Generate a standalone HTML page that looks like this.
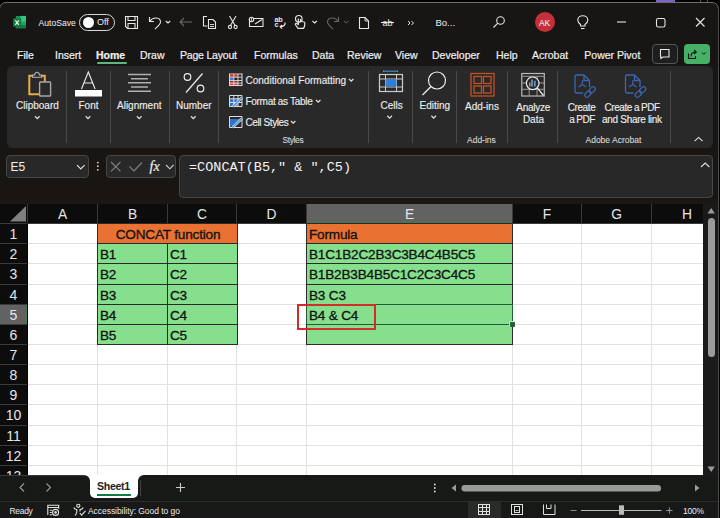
<!DOCTYPE html>
<html><head><meta charset="utf-8">
<style>
*{margin:0;padding:0;box-sizing:border-box}
html,body{width:720px;height:518px;overflow:hidden;background:#000}
body{position:relative;font-family:"Liberation Sans",sans-serif;color:#fff}
.a{position:absolute}
.t{position:absolute;white-space:nowrap;line-height:1}
#win{position:absolute;left:-1px;top:2px;width:720px;height:520px;background:#171615;border:1px solid #6e6e6e;border-radius:7px;overflow:hidden}
.menu{font-size:10.5px;color:#f0f0f0;top:50px;-webkit-text-stroke:0.2px #f0f0f0}
.rib{position:absolute;left:7px;top:66px;width:706px;height:82px;background:#292929;border-radius:6px}
.sep{position:absolute;width:1px;background:#4a4a4a;top:71px;height:72px}
.lbl{font-size:10px;color:#ececec;-webkit-text-stroke:0.15px #ececec}
.glbl{font-size:8.5px;color:#d8d8d8;-webkit-text-stroke:0.1px #d8d8d8}
.cell{font-size:13.6px;color:#111;letter-spacing:-0.2px;-webkit-text-stroke:0.3px #111}
</style></head><body>
<div id="win"></div>
<!-- Title bar -->
<svg class="a" style="left:13px;top:15px" width="14" height="14" viewBox="0 0 14 14">
 <rect x="2.8" y="0.9" width="10.2" height="12.3" rx="0.8" fill="#1d8f55"/>
 <rect x="7.5" y="0.9" width="5.5" height="6" fill="#33c481"/>
 <rect x="7.5" y="6.9" width="5.5" height="3.2" fill="#21a366"/>
 <rect x="2.8" y="10.1" width="10.2" height="3.1" fill="#167a45"/>
 <rect x="0.1" y="3.2" width="8.1" height="8.5" rx="0.8" fill="#107c41"/>
 <path d="M2.3 5.3 L5.9 9.8 M5.9 5.3 L2.3 9.8" stroke="#e6f7ec" stroke-width="1.2"/>
</svg>
<div class="t" style="left:38.5px;top:18.6px;font-size:8.6px;color:#f0f0f0">AutoSave</div>
<div class="a" style="left:79px;top:14px;width:36px;height:17px;border:1px solid #d8d8d8;border-radius:9px"></div>
<div class="a" style="left:83px;top:17px;width:11px;height:11px;border-radius:50%;background:#fff"></div>
<div class="t" style="left:97px;top:18px;font-size:9px;color:#f0f0f0">Off</div>
<svg class="a" style="left:0;top:0" width="720" height="42" viewBox="0 0 720 42" fill="none" stroke="#e6e6e6" stroke-width="1.1">
 <!-- save -->
 <path d="M125.5 16.5 H137.5 V28.5 H127.5 L125.5 26.5 Z"/>
 <path d="M128 16.5 V20.5 H135 V16.5"/>
 <path d="M128 28.5 V23.5 H135 V28.5"/>
 <!-- undo -->
 <path d="M149.5 17 V21.5 H154" />
 <path d="M149.8 21.2 C153 16.5 160.5 17 160.5 22 C160.5 24.5 157 27 155 29"/>
 <path d="M165.8 21 L168 23 L170.2 21" stroke-width="1.2"/>
 <!-- back arrow disabled -->
 <path d="M180 22 H192 M184 18 L180 22 L184 26" stroke="#6a6a6a"/>
 <!-- copy -->
 <path d="M207 16.5 H203.5 V26 H207.5"/>
 <path d="M208.5 19.5 H213 L215.5 22 V28.5 H208.5 Z"/>
 <path d="M210 24.5 H214 M210 26.5 H214" stroke-width="0.9"/>
 <!-- scissors -->
 <path d="M229.5 16 L235 25.5 M236 16 L230.5 25.5"/>
 <circle cx="230" cy="27" r="1.6"/>
 <circle cx="235.6" cy="27" r="1.6"/>
 <!-- envelope attach -->
 <path d="M249.5 19 V26.5 H263 V18.5 H254"/>
 <path d="M255 24 L262 19.5"/>
 <circle cx="251.5" cy="19.5" r="2.2"/>
 <path d="M251.5 18 V21" stroke-width="0.8"/>
 <!-- spelling -->
 <text x="274.6" y="21.8" font-size="7.2" font-weight="bold" fill="#e6e6e6" stroke="none" font-family="Liberation Sans" letter-spacing="-0.3">ab</text>
 <text x="274.6" y="27.3" font-size="7.2" font-weight="bold" fill="#e6e6e6" stroke="none" font-family="Liberation Sans">c</text>
 <path d="M285 22.3 C285.5 24.5 284 26.5 280.5 26.8 M282 25 L280.2 26.8 L282 28.6" stroke-width="1.2"/>
 <!-- touch -->
 <circle cx="298.8" cy="18.8" r="3.3" stroke-width="1.2"/>
 <path d="M298.3 18.5 V24.5 L296.5 23.5 C295.5 23 295 24.2 295.6 25 L298 28.3 H303.5 C304.5 27 304.8 25.5 304.8 24 V22.8 C304.8 21.5 302.5 21.5 300.5 21.5 V19" stroke-width="1.2"/>
 <path d="M312.5 21 L314.7 23 L316.9 21" stroke-width="1.2"/>
 <!-- redo disabled -->
 <path d="M338.5 17 V21.5 H334" stroke="#666"/>
 <path d="M338.2 21.2 C335 16.5 327.5 17 327.5 22 C327.5 24.5 331 27 333 29" stroke="#666"/>
 <path d="M344 21 L346.2 23 L348.4 21" stroke="#666" stroke-width="1"/>
 <!-- doc -->
 <path d="M359.5 17.5 H365 L368.5 21 V28.5 H359.5 Z"/>
 <path d="M365 17.5 V21 H368.5" stroke-width="0.9"/>
 <!-- strikethrough ab -->
 <text x="382.5" y="26" font-size="9" fill="#e6e6e6" stroke="none" font-family="Liberation Sans">ab</text>
 <path d="M381 22.5 H394"/>
 <!-- chevrons >> -->
 <path d="M408 21 L410 23 L408 25 M411.5 21 L413.5 23 L411.5 25" stroke-width="1"/>
 <!-- search -->
 <circle cx="500.5" cy="20.5" r="3.8"/>
 <path d="M497.8 23.2 L493.5 27.5"/>
 <!-- lightbulb -->
 <path d="M580.5 26 V24.5 C578.5 23 577.8 21.5 577.8 20 C577.8 17.5 580 15.8 582.8 15.8 C585.6 15.8 587.8 17.5 587.8 20 C587.8 21.5 587 23 585 24.5 V26 Z"/>
 <path d="M581 28.5 H584.5"/>
 <!-- minimize -->
 <path d="M617 22 H626" stroke-width="1.1"/>
 <!-- maximize -->
 <rect x="656.5" y="18.5" width="8.5" height="8.5" rx="1.8"/>
 <!-- close -->
 <path d="M696 18 L704.5 26.5 M704.5 18 L696 26.5"/>
</svg>
<div class="t" style="left:435.5px;top:18px;font-size:9.5px;color:#f0f0f0">Bo...</div>
<div class="a" style="left:535px;top:12px;width:20px;height:20px;border-radius:50%;background:#c42f3a"></div>
<div class="t" style="left:539px;top:18.5px;font-size:8.5px;color:#fff;letter-spacing:-0.2px">AK</div>

<!-- Menu -->
<div class="t menu" style="left:17px">File</div>
<div class="t menu" style="left:55px">Insert</div>
<div class="t menu" style="left:96px;font-weight:bold">Home</div>
<div class="a" style="left:97px;top:62px;width:30px;height:2px;background:#5fb57c;border-radius:1px"></div>
<div class="t menu" style="left:140px">Draw</div>
<div class="t menu" style="left:180px;letter-spacing:-0.2px">Page Layout</div>
<div class="t menu" style="left:254px">Formulas</div>
<div class="t menu" style="left:312px">Data</div>
<div class="t menu" style="left:347px">Review</div>
<div class="t menu" style="left:395px">View</div>
<div class="t menu" style="left:432px">Developer</div>
<div class="t menu" style="left:496px">Help</div>
<div class="t menu" style="left:532px">Acrobat</div>
<div class="t menu" style="left:584.3px">Power Pivot</div>
<div class="a" style="left:652px;top:44px;width:26px;height:20px;border:1px solid #555;border-radius:4px;background:#1e1e1e"></div>
<svg class="a" style="left:652px;top:44px" width="26" height="20" viewBox="0 0 26 20" fill="none" stroke="#e8e8e8" stroke-width="1.1">
 <path d="M8.5 5.5 H17 V13 H11 L9 14.5 V13 H8.5 Z"/>
</svg>
<div class="a" style="left:684px;top:44px;width:26px;height:20px;border-radius:4px;background:#46b064"></div>
<svg class="a" style="left:684px;top:44px" width="26" height="20" viewBox="0 0 26 20" fill="none" stroke="#111" stroke-width="1.1">
 <path d="M4.5 9.5 V14.5 H11.5 V12"/>
 <path d="M7 12.5 C7 9.5 9 8 12 8 M10 5.8 L12.3 8 L10 10.2"/>
 <path d="M18 8.5 L19.8 10.3 L21.6 8.5" stroke-width="1"/>
</svg>

<!-- Ribbon -->
<div class="rib"></div>
<div class="sep" style="left:66px"></div>
<div class="sep" style="left:110px"></div>
<div class="sep" style="left:169px"></div>
<div class="sep" style="left:218px"></div>
<div class="sep" style="left:368px"></div>
<div class="sep" style="left:412px"></div>
<div class="sep" style="left:456px"></div>
<div class="sep" style="left:507px"></div>
<div class="sep" style="left:557px"></div>
<div class="sep" style="left:670px"></div>

<svg class="a" style="left:0;top:60px" width="720" height="90" viewBox="0 60 720 90" fill="none">
 <!-- clipboard -->
 <path d="M32.5 75.8 H29.3 V94.3 H39.5 M41.5 75.8 H44.8 V81.5" stroke="#e8ab45" stroke-width="2"/>
 <path d="M32.5 77.3 V75 H34.5 C35 73 35.8 72.3 37 72.3 C38.2 72.3 39 73 39.5 75 H41.5 V77.3 Z" stroke="#b8b8b8" stroke-width="1.1"/>
 <rect x="39.6" y="82" width="11" height="14" rx="0.8" stroke="#a8a8a8" stroke-width="1.4"/>
 <!-- Font A -->
 <path d="M81.5 89 L88.3 72 L95.1 89 M84 83 H92.6" stroke="#eee" stroke-width="1.1"/>
 <rect x="75" y="90" width="27" height="6.5" fill="#fff"/>
 <!-- Alignment -->
 <path d="M128 74.5 H151 M131 78.7 H148 M128 82.8 H151 M131 87 H148 M128 91.2 H151" stroke="#b0b0b0" stroke-width="1.4"/>
 <!-- % -->
 <circle cx="187.5" cy="77" r="3.3" stroke="#eee" stroke-width="1.2"/>
 <circle cx="200.5" cy="88.5" r="3.3" stroke="#eee" stroke-width="1.2"/>
 <path d="M202.5 73.5 L186 92.5" stroke="#eee" stroke-width="1.2"/>
 <!-- CF icon -->
 <rect x="229.5" y="74" width="12.5" height="11.5" stroke="#ddd" stroke-width="1"/>
 <rect x="230" y="74.5" width="8" height="2.5" fill="#e03a3a"/>
 <rect x="230" y="77.5" width="3.5" height="2.8" fill="#3b7bd9"/>
 <rect x="230" y="81.5" width="8" height="3.5" fill="#e03a3a"/>
 <path d="M229.5 77.2 H242 M229.5 80.5 H242 M229.5 83.2 H242 M233.8 74 V85.5 M238 74 V85.5" stroke="#ddd" stroke-width="0.9"/>
 <!-- FaT icon -->
 <rect x="230" y="99" width="8" height="7.5" fill="#2f73c9"/>
 <path d="M229.5 95.5 H242 V106.5 H229.5 Z M229.5 98.8 H242 M229.5 102.5 H242 M233.8 95.5 V106.5 M238 95.5 V106.5" stroke="#ddd" stroke-width="1"/>
 <path d="M233 106.5 L242 97.5" stroke="#ddd" stroke-width="2.6"/>
 <path d="M233 106.5 L242 97.5" stroke="#4a8fe0" stroke-width="1.2"/>
 <!-- CS icon -->
 <path d="M230 119 H241.5 L230 127.5 Z" fill="#2f73c9"/>
 <path d="M229.5 116.5 H242 V127.5 H229.5 Z" stroke="#ddd" stroke-width="1"/>
 <path d="M232.5 127.5 L242 118.5" stroke="#ddd" stroke-width="2.6"/>
 <path d="M232.5 127.5 L242 118.5" stroke="#4a8fe0" stroke-width="1.2"/>
 <!-- Cells icon -->
 <path d="M383.5 70.5 V72 M397.5 70.5 V72 M383.5 71.2 H397.5" stroke="#4a9ae8" stroke-width="1"/>
 <rect x="379.5" y="74.5" width="23" height="17" stroke="#ccc" stroke-width="1.2"/>
 <path d="M379.5 79 H402.5 M379.5 87 H402.5 M385.5 74.5 V91.5 M396.5 74.5 V91.5" stroke="#ccc" stroke-width="1"/>
 <rect x="385.5" y="79.5" width="11" height="7" fill="#2f7fd8"/>
 <!-- Editing magnifier -->
 <circle cx="437" cy="80.5" r="8.5" stroke="#eee" stroke-width="1.2"/>
 <path d="M431 86.5 L422.5 95" stroke="#eee" stroke-width="1.2"/>
 <!-- Add-ins -->
 <rect x="471" y="73.5" width="23" height="22.5" stroke="#c44f24" stroke-width="1.3"/>
 <rect x="474" y="76.5" width="7.5" height="7" stroke="#c44f24" stroke-width="1.3"/>
 <rect x="483.5" y="76.5" width="7.5" height="7" stroke="#c44f24" stroke-width="1.3"/>
 <rect x="474" y="86" width="7.5" height="7" stroke="#c44f24" stroke-width="1.3"/>
 <rect x="483.5" y="86" width="7.5" height="7" stroke="#c44f24" stroke-width="1.3"/>
 <!-- Analyze data -->
 <rect x="521.8" y="73.5" width="22.5" height="22.5" stroke="#b8b8b8" stroke-width="1.2"/>
 <path d="M521.8 76.3 H544.3 M521.8 83 H544.3 M521.8 89.3 H544.3 M529.2 76.3 V96 M537 76.3 V96" stroke="#9a9a9a" stroke-width="1"/>
 <circle cx="532.7" cy="83.3" r="6.3" fill="#292929" stroke="#e8e8e8" stroke-width="1.2"/>
 <path d="M529.8 86.5 V82.5 M532 86.5 V79.5" stroke="#bbb" stroke-width="1.2"/>
 <path d="M534.8 86.5 V80.8" stroke="#4a9ae8" stroke-width="1.8"/>
 <path d="M537.3 87.8 L543.5 95.5" stroke="#e8e8e8" stroke-width="1.3"/>
 <!-- PDF icons -->
 <g fill="none">
  <path d="M584 75 H576.5 Q575 75 575 76.5 V91.5 Q575 93 576.5 93 H583 M584 75 L589.5 80.5 V87 M584 75 V80.5 H589.5" stroke="#3b66b5" stroke-width="1.3"/>
  <path d="M582.3 80 V84.5 M582.3 84.5 L578.5 87 M582.3 84.5 L586.2 87" stroke="#3b66b5" stroke-width="1.1"/>
  <g transform="rotate(-45 590 92)">
   <rect x="583.5" y="89.8" width="7" height="4.4" rx="2.2" stroke="#3b66b5" stroke-width="1.2"/>
   <rect x="589.5" y="89.8" width="7" height="4.4" rx="2.2" stroke="#3b66b5" stroke-width="1.2"/>
  </g>
 </g>
 <g fill="none" transform="translate(50.5,0)">
  <path d="M584 75 H576.5 Q575 75 575 76.5 V91.5 Q575 93 576.5 93 H583 M584 75 L589.5 80.5 V87 M584 75 V80.5 H589.5" stroke="#3b66b5" stroke-width="1.3"/>
  <path d="M582.3 80 V84.5 M582.3 84.5 L578.5 87 M582.3 84.5 L586.2 87" stroke="#3b66b5" stroke-width="1.1"/>
  <g transform="rotate(-45 590 92)">
   <rect x="583.5" y="89.8" width="7" height="4.4" rx="2.2" stroke="#3b66b5" stroke-width="1.2"/>
   <rect x="589.5" y="89.8" width="7" height="4.4" rx="2.2" stroke="#3b66b5" stroke-width="1.2"/>
  </g>
 </g>
 <!-- chevrons -->
 <g stroke="#e0e0e0" stroke-width="1.3">
  <path d="M35 116.3 L37.3 118.6 L39.6 116.3"/>
  <path d="M85.7 116.3 L88 118.6 L90.3 116.3"/>
  <path d="M136.9 116.3 L139.2 118.6 L141.5 116.3"/>
  <path d="M191 116.3 L193.3 118.6 L195.6 116.3"/>
  <path d="M349 79 L351.2 81.2 L353.4 79"/>
  <path d="M316 100 L318.2 102.2 L320.4 100"/>
  <path d="M291 121 L293.2 123.2 L295.4 121"/>
  <path d="M387.3 115.8 L389.6 118.1 L391.9 115.8"/>
  <path d="M431.4 115.8 L433.7 118.1 L436 115.8"/>
  <path d="M694.6 141.2 L698.6 137.4 L702.6 141.2" stroke-width="1.1"/>
 </g>
</svg>
<div class="t lbl" style="left:16px;top:100.5px">Clipboard</div>
<div class="t lbl" style="left:78.5px;top:100.5px">Font</div>
<div class="t lbl" style="left:117px;top:100.5px">Alignment</div>
<div class="t lbl" style="left:176px;top:100.5px">Number</div>
<div class="t lbl" style="left:245.5px;top:76px">Conditional Formatting</div>
<div class="t lbl" style="left:245.5px;top:97px;letter-spacing:-0.3px">Format as Table</div>
<div class="t lbl" style="left:245.5px;top:117.7px;letter-spacing:-0.4px">Cell Styles</div>
<div class="t glbl" style="left:282.5px;top:136px;letter-spacing:-0.4px">Styles</div>
<div class="t lbl" style="left:380.5px;top:100.5px">Cells</div>
<div class="t lbl" style="left:419.5px;top:100.5px">Editing</div>
<div class="t lbl" style="left:465px;top:102px">Add-ins</div>
<div class="t glbl" style="left:467px;top:136px">Add-ins</div>
<div class="t lbl" style="left:516.3px;top:102.7px;letter-spacing:-0.25px">Analyze</div>
<div class="t lbl" style="left:522.9px;top:115.3px">Data</div>
<div class="t lbl" style="left:567.7px;top:102.7px;letter-spacing:-0.4px">Create</div>
<div class="t lbl" style="left:569.2px;top:115.3px;letter-spacing:-0.45px;word-spacing:-0.3px">a PDF</div>
<div class="t lbl" style="left:604.4px;top:102.7px;letter-spacing:-0.4px;word-spacing:-0.5px">Create a PDF</div>
<div class="t lbl" style="left:602px;top:115.3px;letter-spacing:-0.3px">and Share link</div>
<div class="t glbl" style="left:585.5px;top:136px">Adobe Acrobat</div>

<!-- Formula bar -->
<div class="a fbarbg" style="left:0;top:148px;width:718px;height:56px;background:#191512"></div>
<div class="a" style="left:6px;top:155px;width:83px;height:23px;border:1px solid #464646;border-radius:4px;background:#282828"></div>
<div class="t" style="left:10.5px;top:161px;font-size:12px;color:#f0f0f0">E5</div>
<div class="a" style="left:105.5px;top:155px;width:70px;height:23px;border:1px solid #464646;border-radius:4px;background:#282828"></div>
<div class="a" style="left:179px;top:155px;width:534px;height:43px;border:1px solid #464646;border-radius:4px;background:#282828"></div>
<svg class="a" style="left:0;top:150px" width="720" height="50" viewBox="0 150 720 50" fill="none">
 <path d="M77 165.2 L80.8 169 L84.6 165.2" stroke="#ddd" stroke-width="1.2"/>
 <circle cx="97.8" cy="162.6" r="0.9" fill="#ddd"/>
 <circle cx="97.8" cy="166.2" r="0.9" fill="#ddd"/>
 <circle cx="97.8" cy="169.8" r="0.9" fill="#ddd"/>
 <path d="M111 162 L120.5 171.3 M120.5 162 L111 171.3" stroke="#808080" stroke-width="1.1"/>
 <path d="M129.5 166.5 L134 171 L142 162.5" stroke="#808080" stroke-width="1.1"/>
 <path d="M166 165 L169.8 168.8 L173.6 165" stroke="#ccc" stroke-width="1.1"/>
 <path d="M701 167 L705.2 163 L709.4 167" stroke="#ddd" stroke-width="1.1"/>
</svg>
<div class="t" style="left:149.5px;top:159.6px;font-family:'Liberation Serif',serif;font-style:italic;font-size:14px;color:#eee;-webkit-text-stroke:0.2px #eee">fx</div>
<div class="t" style="left:189px;top:161px;font-family:'Liberation Mono',monospace;font-size:13.5px;color:#f4f4f4">=CONCAT(B5," &amp; ",C5)</div>

<!-- Grid -->
<div class="a" style="left:0;top:199px;width:718px;height:276px;background:#1a1714"></div>
<div class="a" style="left:0;top:204px;width:703px;height:19px;background:#0c0c0c"></div>
<div class="a" style="left:703px;top:204px;width:15px;height:271px;background:#1a1a1a"></div>
<div class="a" style="left:0;top:223px;width:27px;height:252px;background:#0c0c0c"></div>
<div class="a" style="left:28px;top:224px;width:675px;height:251px;background:#fff"></div>
<div class="a" style="left:306px;top:204px;width:206px;height:19px;background:#626262"></div>
<div class="a" style="left:0;top:304px;width:27px;height:20px;background:#626262"></div>
<div class="a" style="left:26px;top:304px;width:1px;height:20px;background:#3d7a4e"></div>
<div class="a" style="left:306px;top:222px;width:206px;height:1px;background:#3d7a4e"></div>
<div class="a" style="left:97px;top:224px;width:1px;height:251px;background:#e1e1e1"></div>
<div class="a" style="left:167px;top:224px;width:1px;height:251px;background:#e1e1e1"></div>
<div class="a" style="left:236px;top:224px;width:1px;height:251px;background:#e1e1e1"></div>
<div class="a" style="left:306px;top:224px;width:1px;height:251px;background:#e1e1e1"></div>
<div class="a" style="left:512px;top:224px;width:1px;height:251px;background:#e1e1e1"></div>
<div class="a" style="left:581px;top:224px;width:1px;height:251px;background:#e1e1e1"></div>
<div class="a" style="left:651px;top:224px;width:1px;height:251px;background:#e1e1e1"></div>
<div class="a" style="left:28px;top:243px;width:675px;height:1px;background:#e1e1e1"></div>
<div class="a" style="left:28px;top:263px;width:675px;height:1px;background:#e1e1e1"></div>
<div class="a" style="left:28px;top:284px;width:675px;height:1px;background:#e1e1e1"></div>
<div class="a" style="left:28px;top:304px;width:675px;height:1px;background:#e1e1e1"></div>
<div class="a" style="left:28px;top:324px;width:675px;height:1px;background:#e1e1e1"></div>
<div class="a" style="left:28px;top:344px;width:675px;height:1px;background:#e1e1e1"></div>
<div class="a" style="left:28px;top:364px;width:675px;height:1px;background:#e1e1e1"></div>
<div class="a" style="left:28px;top:384px;width:675px;height:1px;background:#e1e1e1"></div>
<div class="a" style="left:28px;top:404px;width:675px;height:1px;background:#e1e1e1"></div>
<div class="a" style="left:28px;top:425px;width:675px;height:1px;background:#e1e1e1"></div>
<div class="a" style="left:28px;top:445px;width:675px;height:1px;background:#e1e1e1"></div>
<div class="a" style="left:28px;top:465px;width:675px;height:1px;background:#e1e1e1"></div>
<div class="a" style="left:27px;top:204px;width:1px;height:19px;background:#3a3a3a"></div>
<div class="a" style="left:97px;top:204px;width:1px;height:19px;background:#3a3a3a"></div>
<div class="a" style="left:167px;top:204px;width:1px;height:19px;background:#3a3a3a"></div>
<div class="a" style="left:236px;top:204px;width:1px;height:19px;background:#3a3a3a"></div>
<div class="a" style="left:306px;top:204px;width:1px;height:19px;background:#3a3a3a"></div>
<div class="a" style="left:512px;top:204px;width:1px;height:19px;background:#3a3a3a"></div>
<div class="a" style="left:581px;top:204px;width:1px;height:19px;background:#3a3a3a"></div>
<div class="a" style="left:651px;top:204px;width:1px;height:19px;background:#3a3a3a"></div>
<div class="a" style="left:0;top:223px;width:703px;height:1px;background:#3a3a3a"></div>
<div class="a" style="left:0;top:243px;width:27px;height:1px;background:#3a3a3a"></div>
<div class="a" style="left:0;top:263px;width:27px;height:1px;background:#3a3a3a"></div>
<div class="a" style="left:0;top:284px;width:27px;height:1px;background:#3a3a3a"></div>
<div class="a" style="left:0;top:304px;width:27px;height:1px;background:#3a3a3a"></div>
<div class="a" style="left:0;top:324px;width:27px;height:1px;background:#3a3a3a"></div>
<div class="a" style="left:0;top:344px;width:27px;height:1px;background:#3a3a3a"></div>
<div class="a" style="left:0;top:364px;width:27px;height:1px;background:#3a3a3a"></div>
<div class="a" style="left:0;top:384px;width:27px;height:1px;background:#3a3a3a"></div>
<div class="a" style="left:0;top:404px;width:27px;height:1px;background:#3a3a3a"></div>
<div class="a" style="left:0;top:425px;width:27px;height:1px;background:#3a3a3a"></div>
<div class="a" style="left:0;top:445px;width:27px;height:1px;background:#3a3a3a"></div>
<div class="a" style="left:0;top:465px;width:27px;height:1px;background:#3a3a3a"></div>
<div class="a" style="left:27px;top:223px;width:1px;height:252px;background:#040404"></div>
<svg class="a" style="left:0;top:204px" width="27" height="19"><path d="M26 2 L26 17.5 L10 17.5 Z" fill="#808080"/></svg>
<div class="t" style="left:28px;width:69px;top:208.3px;text-align:center;font-size:13.8px;color:#e6e6e6">A</div>
<div class="t" style="left:98px;width:69px;top:208.3px;text-align:center;font-size:13.8px;color:#e6e6e6">B</div>
<div class="t" style="left:168px;width:68px;top:208.3px;text-align:center;font-size:13.8px;color:#e6e6e6">C</div>
<div class="t" style="left:237px;width:69px;top:208.3px;text-align:center;font-size:13.8px;color:#e6e6e6">D</div>
<div class="t" style="left:307px;width:205px;top:208.3px;text-align:center;font-size:13.8px;color:#e6e6e6">E</div>
<div class="t" style="left:513px;width:68px;top:208.3px;text-align:center;font-size:13.8px;color:#e6e6e6">F</div>
<div class="t" style="left:582px;width:69px;top:208.3px;text-align:center;font-size:13.8px;color:#e6e6e6">G</div>
<div class="t" style="left:652px;width:70px;top:208.3px;text-align:center;font-size:13.8px;color:#e6e6e6">H</div>
<div class="t" style="left:0;width:27px;top:227px;text-align:center;font-size:14px;color:#e6e6e6">1</div>
<div class="t" style="left:0;width:27px;top:247px;text-align:center;font-size:14px;color:#e6e6e6">2</div>
<div class="t" style="left:0;width:27px;top:267px;text-align:center;font-size:14px;color:#e6e6e6">3</div>
<div class="t" style="left:0;width:27px;top:288px;text-align:center;font-size:14px;color:#e6e6e6">4</div>
<div class="t" style="left:0;width:27px;top:308px;text-align:center;font-size:14px;color:#e6e6e6">5</div>
<div class="t" style="left:0;width:27px;top:328px;text-align:center;font-size:14px;color:#e6e6e6">6</div>
<div class="t" style="left:0;width:27px;top:348px;text-align:center;font-size:14px;color:#e6e6e6">7</div>
<div class="t" style="left:0;width:27px;top:368px;text-align:center;font-size:14px;color:#e6e6e6">8</div>
<div class="t" style="left:0;width:27px;top:388px;text-align:center;font-size:14px;color:#e6e6e6">9</div>
<div class="t" style="left:0;width:27px;top:408px;text-align:center;font-size:14px;color:#e6e6e6">10</div>
<div class="t" style="left:0;width:27px;top:429px;text-align:center;font-size:14px;color:#e6e6e6">11</div>
<div class="t" style="left:0;width:27px;top:449px;text-align:center;font-size:14px;color:#e6e6e6">12</div>
<div class="t" style="left:0;width:27px;top:469px;text-align:center;font-size:14px;color:#e6e6e6">13</div>
<div class="a" style="left:97px;top:223px;width:141px;height:21px;background:#e97132;border:1px solid #2a2a2a"></div>
<div class="a" style="left:306px;top:223px;width:207px;height:21px;background:#e97132;border:1px solid #2a2a2a"></div>
<div class="a" style="left:97px;top:243px;width:71px;height:21px;background:#85df8c;border:1px solid #2a2a2a"></div>
<div class="a" style="left:167px;top:243px;width:71px;height:21px;background:#85df8c;border:1px solid #2a2a2a"></div>
<div class="a" style="left:306px;top:243px;width:207px;height:21px;background:#85df8c;border:1px solid #2a2a2a"></div>
<div class="a" style="left:97px;top:263px;width:71px;height:22px;background:#85df8c;border:1px solid #2a2a2a"></div>
<div class="a" style="left:167px;top:263px;width:71px;height:22px;background:#85df8c;border:1px solid #2a2a2a"></div>
<div class="a" style="left:306px;top:263px;width:207px;height:22px;background:#85df8c;border:1px solid #2a2a2a"></div>
<div class="a" style="left:97px;top:284px;width:71px;height:21px;background:#85df8c;border:1px solid #2a2a2a"></div>
<div class="a" style="left:167px;top:284px;width:71px;height:21px;background:#85df8c;border:1px solid #2a2a2a"></div>
<div class="a" style="left:306px;top:284px;width:207px;height:21px;background:#85df8c;border:1px solid #2a2a2a"></div>
<div class="a" style="left:97px;top:304px;width:71px;height:21px;background:#85df8c;border:1px solid #2a2a2a"></div>
<div class="a" style="left:167px;top:304px;width:71px;height:21px;background:#85df8c;border:1px solid #2a2a2a"></div>
<div class="a" style="left:306px;top:304px;width:207px;height:21px;background:#85df8c;border:1px solid #2a2a2a"></div>
<div class="a" style="left:97px;top:324px;width:71px;height:21px;background:#85df8c;border:1px solid #2a2a2a"></div>
<div class="a" style="left:167px;top:324px;width:71px;height:21px;background:#85df8c;border:1px solid #2a2a2a"></div>
<div class="a" style="left:306px;top:324px;width:207px;height:21px;background:#85df8c;border:1px solid #2a2a2a"></div>
<div class="a" style="left:306px;top:304px;width:207px;height:21px;border:1px solid #1f5f33"></div>
<div class="a" style="left:509.5px;top:321.5px;width:5px;height:5px;background:#22603a;border-radius:1px;box-shadow:-0.5px -0.5px 0 0.5px #b8ecbe"></div>
<div class="t cell" style="left:98px;width:140px;text-align:center;top:227.5px">CONCAT function</div>
<div class="t cell" style="left:309px;top:227.5px">Formula</div>
<div class="t cell" style="left:100px;top:247.5px">B1</div>
<div class="t cell" style="left:170px;top:247.5px">C1</div>
<div class="t cell" style="left:100px;top:267.5px">B2</div>
<div class="t cell" style="left:170px;top:267.5px">C2</div>
<div class="t cell" style="left:100px;top:288.5px">B3</div>
<div class="t cell" style="left:170px;top:288.5px">C3</div>
<div class="t cell" style="left:100px;top:308.5px">B4</div>
<div class="t cell" style="left:170px;top:308.5px">C4</div>
<div class="t cell" style="left:100px;top:328.5px">B5</div>
<div class="t cell" style="left:170px;top:328.5px">C5</div>
<div class="t cell" style="left:309px;top:247.5px">B1C1B2C2B3C3B4C4B5C5</div>
<div class="t cell" style="left:309px;top:267.5px">B1B2B3B4B5C1C2C3C4C5</div>
<div class="t cell" style="left:309px;top:288.5px">B3 C3</div>
<div class="t cell" style="left:309px;top:308.5px">B4 &amp; C4</div>
<div class="a" style="left:297px;top:304px;width:79px;height:26px;border:2px solid #d42b2b"></div>
<svg class="a" style="left:703px;top:204px" width="16" height="271"><path d="M4.5 9.5 L8.2 4 L11.9 9.5 Z" fill="#9a9a9a"/><rect x="5" y="14" width="7" height="139" rx="3.5" fill="#9a9a9a"/><path d="M4.5 262.5 L8.2 268 L11.9 262.5 Z" fill="#9a9a9a"/></svg>
<!-- Sheet tabs bar -->
<div class="a" style="left:0;top:475px;width:718px;height:26px;background:#171916"></div>
<div class="a" style="left:0;top:475px;width:90px;height:1px;background:#3a3a3a"></div>
<div class="a" style="left:90px;top:475px;width:48px;height:23px;background:#fff;border-radius:0 0 5px 5px"></div>
<svg class="a" style="left:0;top:470px" width="720" height="32" viewBox="0 470 720 32" fill="none">
 <path d="M84 475 A6 6 0 0 1 90 481 V475 Z" fill="#fff"/>
 <path d="M144 475 A6 6 0 0 0 138 481 V475 Z" fill="#fff"/>
 <path d="M24 483.5 L20 487.5 L24 491.5" stroke="#999" stroke-width="1.1"/>
 <path d="M46.5 483.5 L50.5 487.5 L46.5 491.5" stroke="#999" stroke-width="1.1"/>
 <path d="M140.5 480 V496" stroke="#3c403c" stroke-width="1.2"/>
 <path d="M176 487.5 H185 M180.5 483 V492" stroke="#ccc" stroke-width="1.1"/>
 <circle cx="434.8" cy="484.5" r="0.9" fill="#ddd"/>
 <circle cx="434.8" cy="488" r="0.9" fill="#ddd"/>
 <circle cx="434.8" cy="491.5" r="0.9" fill="#ddd"/>
 <path d="M451.5 488 L456 484.5 V491.5 Z" fill="#999"/>
 <rect x="461.5" y="485" width="199.5" height="6.5" rx="3.25" fill="#9a9a9a"/>
 <path d="M699.5 488 L695 484.5 V491.5 Z" fill="#999"/>
</svg>
<div class="t" style="left:97px;top:481px;font-size:10.6px;font-weight:bold;color:#222;letter-spacing:-0.3px">Sheet1</div>
<div class="a" style="left:97px;top:493.5px;width:34px;height:2px;background:#107c41"></div>
<!-- Status bar -->
<div class="a" style="left:0;top:501px;width:718px;height:1px;background:#2c2c2c"></div>
<div class="a" style="left:0;top:502px;width:718px;height:16px;background:#181818"></div>
<div class="a" style="left:467.5px;top:502px;width:33px;height:16px;background:#2a2a2a"></div>
<div class="t" style="left:9.5px;top:507px;font-size:8.5px;color:#e8e8e8;letter-spacing:-0.3px">Ready</div>
<div class="t" style="left:88px;top:507px;font-size:8.5px;color:#e8e8e8;letter-spacing:-0.05px">Accessibility: Good to go</div>
<div class="t" style="left:683px;top:507px;font-size:8.5px;color:#e8e8e8;letter-spacing:-0.2px">100%</div>
<svg class="a" style="left:0;top:500px" width="720" height="18" viewBox="0 500 720 18" fill="none" stroke="#e0e0e0" stroke-width="1">
 <!-- macro icon -->
 <path d="M47.8 515 V505.3 H58.7 V508.8 M47.8 507.5 H58.7 M49.8 510.3 H52.2 M49.8 512.5 H51.8 M49.8 514.7 H52.2" stroke-width="1.1"/>
 <circle cx="55.6" cy="512.4" r="3" stroke-width="1.1"/>
 <circle cx="55.6" cy="512.4" r="1.3" fill="#e0e0e0" stroke="none"/>
 <!-- accessibility -->
 <circle cx="78.3" cy="505.8" r="1.6" stroke-width="1.1"/>
 <path d="M73.8 507.5 C74.5 509.3 76.3 509.5 76.8 509.6 V512 C76.8 513.5 75.5 514.8 75 515.5 M83.2 507.5 C82.5 509.3 80.6 509.5 80 509.6 V511.5" stroke-width="1.1"/>
 <path d="M79.8 513 L81.6 515.2 L85.5 510.8" stroke-width="1.1"/>
 <!-- normal view grid -->
 <rect x="478.5" y="504.5" width="11" height="10" />
 <path d="M482.5 504.5 V514.5 M486.5 504.5 V514.5 M478.5 507.5 H489.5 M478.5 511.5 H489.5"/>
 <!-- page layout -->
 <rect x="511.5" y="504.5" width="11" height="10"/>
 <rect x="514.5" y="506.5" width="5" height="6"/>
 <path d="M515.5 510.5 H518.5" stroke-width="0.8"/>
 <!-- page break -->
 <path d="M543.5 504.5 V514.5 H555 V504.5 M546.5 504.5 V508.5 H551 V504.5"/>
 <!-- zoom -->
 <path d="M570.5 510.5 H576.5" stroke="#888"/>
 <path d="M581 510.5 H661.5" stroke="#bbb"/>
 <rect x="619" y="505.3" width="5" height="9.5" fill="#bbb" stroke="none"/>
 <path d="M666.3 510.5 H672.5 M669.4 507.5 V513.5" stroke="#999"/>
</svg>

<div class="a" style="left:718px;top:8px;width:1px;height:510px;background:#4c4c4c"></div>
<div class="a" style="left:656px;top:0;width:19px;height:2px;background:#7d63c4"></div>
<div class="a" style="left:700px;top:0;width:1px;height:2px;background:#555"></div>
<div class="a" style="left:707px;top:0;width:1px;height:2px;background:#555"></div>

</body></html>
